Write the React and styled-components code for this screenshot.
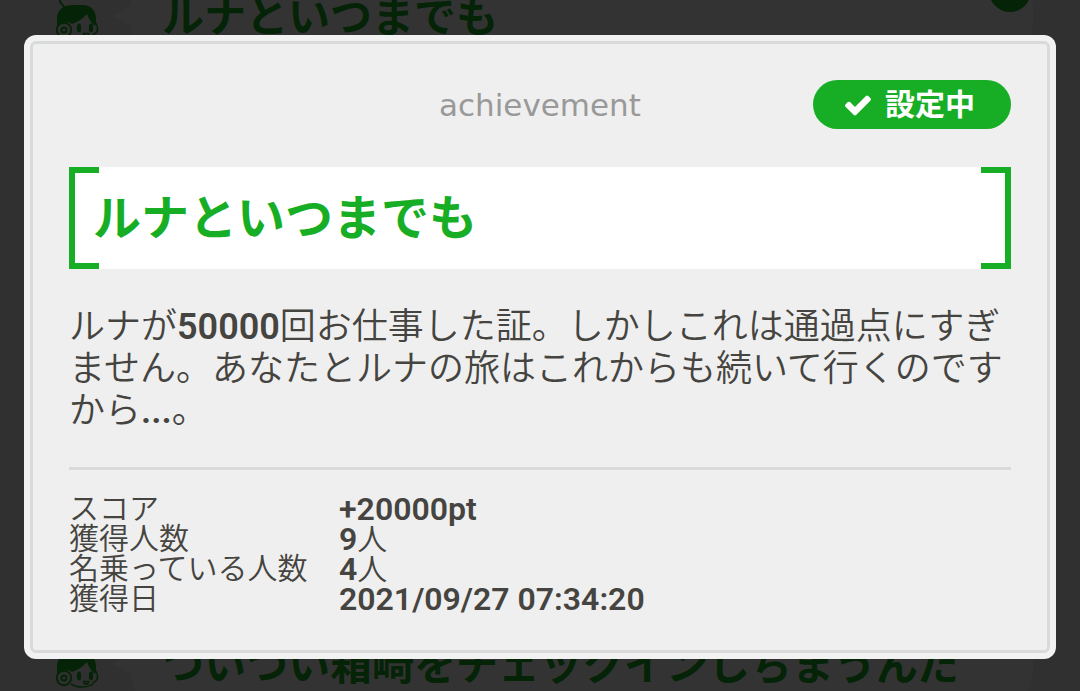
import React from 'react'
import styled, { createGlobalStyle, ThemeProvider } from 'styled-components'

const theme = {
    green: '#17ae25',
    white: '#ffffff',
    paper: '#efefef',
    edge: '#f2f2f2',
    line: '#d9dadb',
    text: '#454440',
    grey: '#999999',
}

const GlobalStyle = createGlobalStyle`
    * {
        box-sizing: border-box;
    }
    body {
        margin: 0;
        background-color: ${tp => tp.theme.paper};
        color: ${tp => tp.theme.text};
        font-family: Roboto, "Noto Sans CJK JP", sans-serif;
    }
`

const Page = styled.div`
    height: 100vh;
    overflow: hidden;
`

const List = styled.ul`
    display: flex;
    flex-direction: column;
    gap: 556px;
    margin: -30px 0 0;
    padding: 0 47px 0 54px;
    list-style: none;
`

const StyledItem = styled.li`
    display: flex;
    height: 92px;
    color: ${tp => tp.theme.green};
    .face {
        flex: none;
        width: 46px;
        height: 76px;
    }
    .tail {
        flex: none;
        align-self: center;
        width: 18px;
        height: 20px;
        margin-left: 12px;
        fill: ${tp => tp.theme.white};
    }
    .bubble {
        flex: 1;
        display: flex;
        align-items: center;
        position: relative;
        padding: 4px 0 0 32px;
        border-radius: 40px;
        background-color: ${tp => tp.theme.white};
    }
    .title {
        margin: 0;
        font-size: 42px;
        line-height: 48px;
        font-weight: 700;
        white-space: nowrap;
    }
`

const Badge = styled.span`
    display: flex;
    align-items: center;
    justify-content: center;
    position: absolute;
    top: 0;
    right: 2px;
    width: 42px;
    height: 42px;
    border-radius: 50%;
    background-color: ${tp => tp.theme.green};
    color: ${tp => tp.theme.white};
    svg {
        width: 26px;
        height: 26px;
    }
`

const Overlay = styled.div`
    position: fixed;
    inset: 0;
    overflow: auto;
    padding: 35px 24px 32px;
    background-color: rgba(0, 0, 0, 0.8);
`

const Modal = styled.section`
    padding: 6px;
    border-radius: 12px;
    background-color: ${tp => tp.theme.edge};
    .inner {
        padding: 36px;
        border: 3px solid ${tp => tp.theme.line};
        border-radius: 6px;
        background-color: ${tp => tp.theme.paper};
    }
`

const Header = styled.header`
    display: grid;
    grid-template-columns: 1fr auto 1fr;
    align-items: center;
    .kind {
        grid-column: 2;
        color: ${tp => tp.theme.grey};
        font-family: 'DejaVu Sans', sans-serif;
        font-size: 31px;
        line-height: 48px;
    }
`

const SetButton = styled.button`
    display: flex;
    align-items: center;
    justify-content: center;
    justify-self: end;
    gap: 12px;
    width: 198px;
    height: 49px;
    padding: 0 6px 0 0;
    border: 0;
    border-radius: 25px;
    background-color: ${tp => tp.theme.green};
    color: ${tp => tp.theme.white};
    font-family: inherit;
    font-size: 30px;
    line-height: 48px;
    font-weight: 700;
    cursor: pointer;
    svg {
        width: 30px;
        height: 30px;
    }
`

const Name = styled.h1`
    display: flex;
    justify-content: space-between;
    height: 102px;
    margin: 38px 0 36px;
    background-color: ${tp => tp.theme.white};
    color: ${tp => tp.theme.green};
    font-size: 48px;
    line-height: 104px;
    font-weight: 700;
    .text {
        flex: 1;
        margin-left: -6px;
    }
`

const Bracket = styled.span`
    width: 30px;
    border: 6px solid ${tp => tp.theme.green};
    border-${tp => (tp.$side === 'left' ? 'right' : 'left')}: 0;
`

const Description = styled.p`
    margin: 37px 0 35px;
    font-size: 36px;
    line-height: 42px;
    font-weight: 350;
    b {
        font-weight: 600;
    }
`

const Divider = styled.hr`
    height: 3px;
    margin: 35px 0 24px;
    border: 0;
    background-color: ${tp => tp.theme.line};
`

const Stats = styled.dl`
    display: grid;
    grid-template-columns: 270px 1fr;
    grid-auto-rows: 30px;
    margin: 0;
    font-size: 30px;
    line-height: 30px;
    font-weight: 350;
    dd {
        margin: 0;
    }
    b {
        font-size: 32px;
        font-weight: 600;
    }
`

const Check = () => (
    <svg viewBox="0 0 1792 1792" fill="currentColor" aria-hidden="true">
        <path d="M1671 566q0 40-28 68l-724 724-136 136q-28 28-68 28t-68-28l-136-136-362-362q-28-28-28-68t28-68l136-136q28-28 68-28t68 28l294 295 656-657q28-28 68-28t68 28l136 136q28 28 28 68z" />
    </svg>
)

const Face = () => (
    <svg className="face" viewBox="54 -30 46 76" fill="none" stroke="currentColor" strokeWidth="1.6">
        <path d="M60 -8V2L65 8" strokeWidth="2" />
        <path
            d="M57 27V17C58 9 64 5 73 5H84C92 6 97 11 96 23L95 26C92 24 89 19 87 14C82 19 78 22 72 24C68 21 62 21 57 27Z"
            fill="currentColor"
            stroke="none"
        />
        <circle cx="64" cy="30" r="7.2" strokeWidth="2" />
        <circle cx="64" cy="30" r="2.6" strokeWidth="2" />
        <path d="M95 22C99 27 98 33 94 34C92 38 88 39 82 39C77 39 74 38 71 36" />
        <ellipse cx="79" cy="28" rx="2.2" ry="4.4" fill="currentColor" stroke="none" />
        <ellipse cx="91" cy="28" rx="2.2" ry="4.4" fill="currentColor" stroke="none" />
        <path d="M83.500 33.500H88.500C88.500 37 84.500 37 83.500 33.500Z" />
    </svg>
)

const Item = ({ title, active }) => (
    <StyledItem>
        <Face />
        <svg className="tail" viewBox="0 0 18 20">
            <path d="M18 0L0 10L18 20Z" />
        </svg>
        <div className="bubble">
            <p className="title">{title}</p>
            {active && (
                <Badge>
                    <Check />
                </Badge>
            )}
        </div>
    </StyledItem>
)

const App = () => (
    <ThemeProvider theme={theme}>
        <GlobalStyle />
        <Page>
            <List>
                <Item title="ルナといつまでも" active />
                <Item title="ついつい箱崎をチェックインしちまうんだ" />
            </List>
        </Page>
        <Overlay>
            <Modal role="dialog" aria-modal="true" aria-labelledby="name">
                <div className="inner">
                    <Header>
                        <span className="kind">achievement</span>
                        <SetButton type="button">
                            <Check />
                            設定中
                        </SetButton>
                    </Header>
                    <Name id="name">
                        <Bracket $side="left" />
                        <span className="text">ルナといつまでも</span>
                        <Bracket $side="right" />
                    </Name>
                    <Description>
                        ルナが<b>50000</b>
                        回お仕事した証。しかしこれは通過点にすぎません。あなたとルナの旅はこれからも続いて行くのですから
                        <b>...</b>。
                    </Description>
                    <Divider />
                    <Stats>
                        <dt>スコア</dt>
                        <dd>
                            <b>+20000pt</b>
                        </dd>
                        <dt>獲得人数</dt>
                        <dd>
                            <b>9</b>人
                        </dd>
                        <dt>名乗っている人数</dt>
                        <dd>
                            <b>4</b>人
                        </dd>
                        <dt>獲得日</dt>
                        <dd>
                            <b>2021/09/27 07:34:20</b>
                        </dd>
                    </Stats>
                </div>
            </Modal>
        </Overlay>
    </ThemeProvider>
)

export default App
